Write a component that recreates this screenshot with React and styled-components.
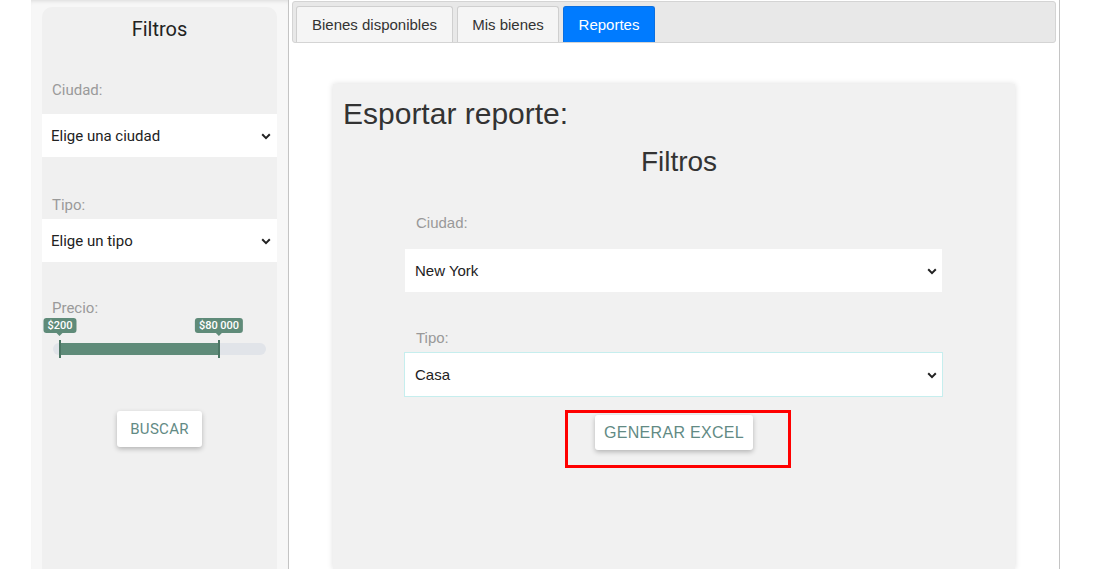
import React from 'react';
import styled, { createGlobalStyle } from 'styled-components';

const GlobalStyle = createGlobalStyle`
  body {
    margin: 0;
    background: #fff;
    font-family: "Liberation Sans", Arial, sans-serif;
  }
`;

const Page = styled.div`
  display: flex;
  height: 569px;
  overflow: hidden;
  padding-left: 31px;
`;

const Sidebar = styled.aside`
  width: 258px;
  display: flex;
  flex-direction: column;
  padding: 7px 11px 0;
  box-sizing: border-box;
  background: #f7f7f7;
  border-right: 1px solid #c4c4c4;
  box-shadow: inset 0 4px 4px -3px rgba(0,0,0,.12);
  font-family: Roboto, "Liberation Sans", sans-serif;
`;

const SideCard = styled.div`
  flex: 1;
  display: flex;
  flex-direction: column;
  background: #f0f0f0;
  border-radius: 10px 10px 0 0;
  padding-top: 10px;
`;

const SideTitle = styled.h3`
  margin: 0;
  font-size: 20px;
  line-height: 24px;
  font-weight: 400;
  color: #222;
  text-align: center;
`;

const SideLabel = styled.label`
  display: block;
  margin: ${p => p.$top}px 0 ${p => p.$bottom}px 10px;
  font-size: 15px;
  line-height: 18px;
  color: #9a9a9a;
`;

const SelectWrap = styled.div`
  position: relative;
  height: ${p => p.$height || 43}px;
  margin: 0 ${p => p.$bleed ? -1 : 0}px;
  background: #fff;
  border: ${p => p.$focus ? '1px solid #c6eeee' : 'none'};
  box-sizing: border-box;

  select {
    appearance: none;
    width: 100%;
    height: 100%;
    border: none;
    outline: none;
    background: transparent;
    padding: 0 0 0 ${p => p.$pad || 9}px;
    font: inherit;
    font-size: 15px;
    color: #222;
  }

  svg {
    position: absolute;
    right: ${p => p.$arrow || 6}px;
    top: 50%;
    margin-top: -3px;
    pointer-events: none;
  }
`;

const Chevron = () => (
  <svg width="10" height="7" viewBox="0 0 10 7">
    <path d="M1.2 1.3l3.8 3.8 3.8-3.8" fill="none" stroke="#222" strokeWidth="2" />
  </svg>
);

const Select = ({ options, ...rest }) => (
  <SelectWrap {...rest}>
    <select defaultValue={options[0]}>
      {options.map(o => <option key={o}>{o}</option>)}
    </select>
    <Chevron />
  </SelectWrap>
);

const Slider = styled.div`
  position: relative;
  height: 40px;
  margin: 1px 11px 0;
`;

const Track = styled.div`
  position: absolute;
  left: 0;
  right: 0;
  top: 25px;
  height: 12px;
  border-radius: 6px;
  background: #e1e4e9;
`;

const Range = styled.div`
  position: absolute;
  top: 25px;
  height: 12px;
  background: #5f8b79;
`;

const Handle = styled.div`
  position: absolute;
  top: 22px;
  width: 2px;
  height: 18px;
  margin-left: -1px;
  background: #4b7664;
`;

const Bubble = styled.div`
  position: absolute;
  top: 0;
  transform: translateX(-50%);
  height: 15px;
  padding: 0 4px;
  border-radius: 3px;
  background: #5f8b79;
  color: #fff;
  font-size: 11px;
  font-weight: 500;
  line-height: 15px;
  white-space: nowrap;

  &::after {
    content: '';
    position: absolute;
    left: 50%;
    bottom: -3px;
    margin-left: -3px;
    border: 3px solid transparent;
    border-bottom: none;
    border-top-color: #5f8b79;
  }
`;

const Button = styled.button`
  display: block;
  height: ${p => p.$height}px;
  width: ${p => p.$width}px;
  margin: ${p => p.$margin};
  border: none;
  border-radius: 3px;
  background: #fff;
  box-shadow: 0 2px 5px rgba(0,0,0,.25);
  color: #628a84;
  font-family: inherit;
  font-size: ${p => p.$size}px;
  letter-spacing: .3px;
  padding: 0;
`;

const Main = styled.main`
  width: 771px;
  display: flex;
  flex-direction: column;
  padding: 1px 3px 0;
  box-sizing: border-box;
  border-right: 1px solid #c4c4c4;
`;

const TabBar = styled.nav`
  display: flex;
  align-items: flex-end;
  gap: 4px;
  height: 42px;
  padding: 0 3px;
  box-sizing: border-box;
  background: #e8e8e8;
  border: 1px solid #d4d4d4;
  border-radius: 3px;
`;

const Tab = styled.div`
  height: 36px;
  width: ${p => p.$width}px;
  box-sizing: border-box;
  display: flex;
  align-items: center;
  justify-content: center;
  padding-bottom: 1px;
  font-size: 15px;
  color: ${p => p.$active ? '#fff' : '#333'};
  background: ${p => p.$active ? '#007bff' : '#f5f5f5'};
  border: 1px solid ${p => p.$active ? '#0a6fe0' : '#cfcfcf'};
  border-bottom: none;
  border-radius: 3px 3px 0 0;
`;

const Card = styled.section`
  flex: 1;
  margin: 41px 41px 0;
  background: #f1f1f1;
  box-shadow: 0 0 6px rgba(0,0,0,.14);
  padding-top: 12px;
`;

const CardTitle = styled.h2`
  margin: 0;
  padding-left: 10px;
  font-size: 30px;
  line-height: 36px;
  font-weight: 400;
  color: #333;
`;

const FormTitle = styled.h3`
  margin: 14px 0 0;
  padding-left: 10px;
  font-size: 28px;
  line-height: 32px;
  font-weight: 400;
  color: #333;
  text-align: center;
`;

const Form = styled.div`
  padding: 0 73px 0 72px;
`;

const Label = styled.label`
  display: block;
  margin: ${p => p.$top}px 0 ${p => p.$bottom}px 11px;
  font-size: 15px;
  line-height: 18px;
  color: #999;
`;

const Highlight = styled.div`
  width: 226px;
  height: 58px;
  box-sizing: border-box;
  margin: 13px 0 0 160px;
  padding: 2px 0 0 27px;
  border: 3px solid #ff0000;
`;

const App = () => {
  const lo = 7 / 213 * 100;
  const hi = 166 / 213 * 100;

  return (
    <>
      <GlobalStyle />
      <Page>
        <Sidebar>
          <SideCard>
            <SideTitle>Filtros</SideTitle>
            <SideLabel $top={40} $bottom={15}>Ciudad:</SideLabel>
            <Select options={['Elige una ciudad']} />
            <SideLabel $top={39} $bottom={5}>Tipo:</SideLabel>
            <Select options={['Elige un tipo']} />
            <SideLabel $top={37} $bottom={0}>Precio:</SideLabel>
            <Slider>
              <Track />
              <Range style={{ left: `${lo}%`, width: `${hi - lo}%` }} />
              <Handle style={{ left: `${lo}%` }} />
              <Handle style={{ left: `${hi}%` }} />
              <Bubble style={{ left: `${lo}%` }}>$200</Bubble>
              <Bubble style={{ left: `${hi}%` }}>$80 000</Bubble>
            </Slider>
            <Button $width={85} $height={36} $size={15} $margin="53px auto 0">BUSCAR</Button>
          </SideCard>
        </Sidebar>
        <Main>
          <TabBar>
            <Tab $width={157}>Bienes disponibles</Tab>
            <Tab $width={102}>Mis bienes</Tab>
            <Tab $width={92} $active>Reportes</Tab>
          </TabBar>
          <Card>
            <CardTitle>Esportar reporte:</CardTitle>
            <FormTitle>Filtros</FormTitle>
            <Form>
              <Label $top={36} $bottom={17}>Ciudad:</Label>
              <Select options={['New York']} $pad={10} $arrow={5} />
              <Label $top={37} $bottom={5}>Tipo:</Label>
              <Select options={['Casa']} $pad={10} $arrow={5} $height={45} $focus $bleed />
              <Highlight>
                <Button $width={158} $height={35} $size={16} $margin="0">GENERAR EXCEL</Button>
              </Highlight>
            </Form>
          </Card>
        </Main>
      </Page>
    </>
  );
};

export default App;
